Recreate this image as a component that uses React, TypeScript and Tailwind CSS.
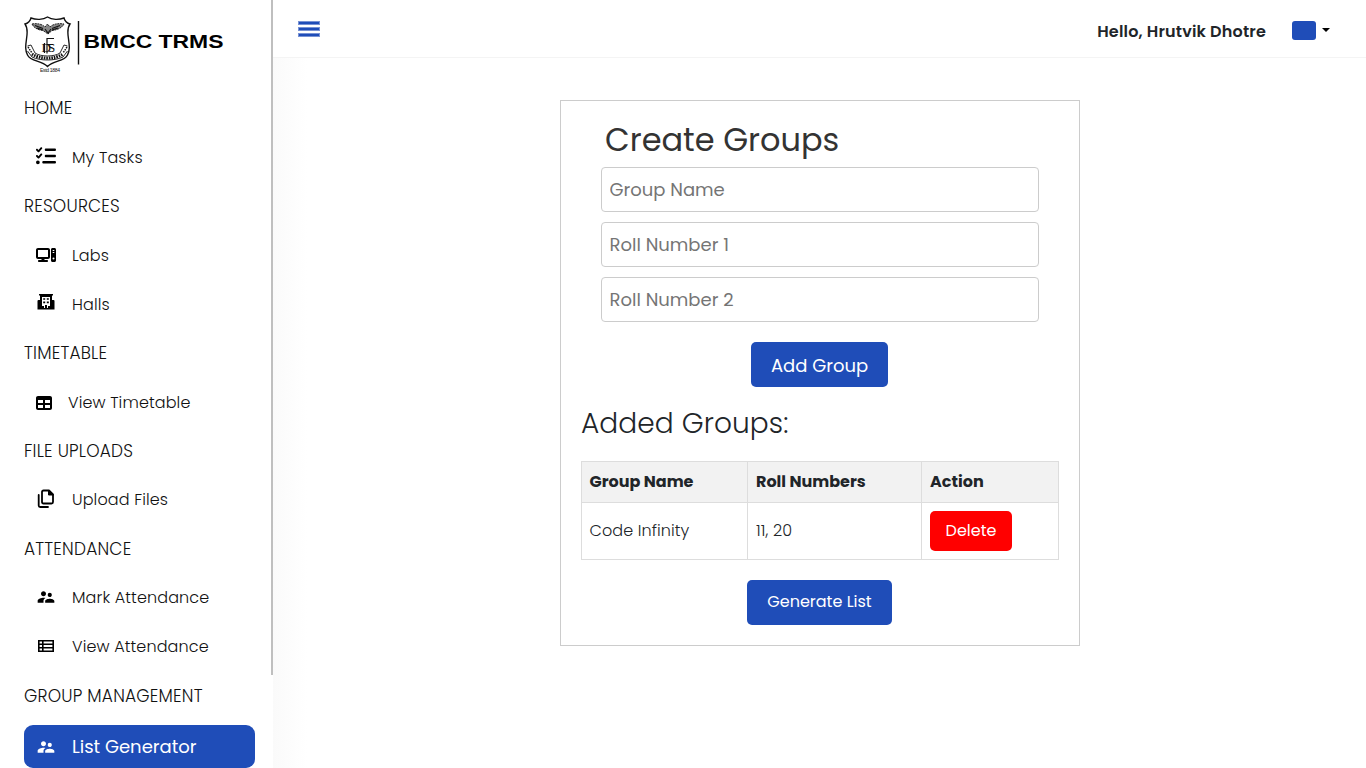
import React from "react";
import { FaListCheck, FaComputer, FaTable } from "react-icons/fa6";
import { MdSupervisorAccount } from "react-icons/md";

function Logo() {
  return (
    <svg width="204" height="64" viewBox="0 0 204 64" className="block" fill="none" stroke="#111">
      <path
        d="M1 8C4 7.500 6.500 4.500 7 2C12 4 19 4 23.500 1C28 4 35 4 40 2C40.500 4.500 43 7.500 46 8C43 12 43.500 17 44.500 23C45.500 30 46 34 43.500 39C40 46 30 44 23.500 50.500C17 44 7 46 3.500 39C1 34 1.500 30 2.500 23C3.500 17 4 12 1 8Z"
        strokeWidth="1.400"
      />
      <path d="M8 8C13 7 18 8 21 11L23.500 8L26 11C29 8 34 7 40 8C38 12 33 14 28 14.500L24 18L19 14.500C14 14 10 12 8 8Z" fill="#888" strokeWidth="0.900" strokeDasharray="2 0.700" />
      <path d="M11 9.500L19 12.500M36 9.500L28 12.500M13 12L19 14M34 12L28 14M21 13L24 17L27 13" strokeWidth="1.100" />
      <text x="17.500" y="36" fontFamily="Liberation Serif, serif" fontSize="13" fill="#111" stroke="none" letterSpacing="-3">DS</text>
      <path d="M23 37.500V22.500H30M23 28.500H29M20.500 27V37" strokeWidth="1.200" />
      <path d="M3.500 30L7 29L9 33L11 37C17 41 30 41 36 37L38 33L40 29L43.500 30M3.500 35L8 41C16 45 31 45 39 41L43.500 35" strokeWidth="0.900" />
      <path d="M8 38C16 43.500 31 43.500 39 38" strokeWidth="3" strokeDasharray="1.600 0.900" />
      <path d="M4 31L8 37M43 31L39 37" strokeWidth="1.500" strokeDasharray="1.500 1" />
      <text x="16" y="55.500" fontFamily="Liberation Sans, sans-serif" fontSize="5" fill="#111" stroke="none" textLength="20">Estd 1884</text>
      <path d="M54.500 5V48.500" strokeWidth="1.400" />
      <text x="59.500" y="32" fontFamily="Liberation Sans, sans-serif" fontWeight="700" fontSize="19" fill="#000" stroke="none" textLength="140" lengthAdjust="spacingAndGlyphs">BMCC TRMS</text>
    </svg>
  );
}

function HallIcon() {
  return (
    <svg width="18" height="16" viewBox="0 0 18 16">
      <path
        fillRule="evenodd"
        d="M2 0H16V1.500H15V6H16.500Q17.500 6 17.500 7V15.500H.5V7Q.5 6 1.500 6H3V1.500H2ZM5 3V12H7V14H8V11H10V14H11V12H13V3ZM6.200 4.200V5.800H8.200V4.200ZM9.800 4.200V5.800H11.800V4.200ZM6.200 7.500V9.200H8.200V7.500ZM9.800 7.500V9.200H11.800V7.500Z"
      />
    </svg>
  );
}

function FilesIcon() {
  return (
    <svg width="18" height="20" viewBox="0 0 18 20" fill="none" stroke="#000" strokeWidth="1.800" strokeLinejoin="round" strokeLinecap="round">
      <path d="M6.500 1.500H12L16 5.500V13Q16 14.500 14.500 14.500H6.500Q5 14.500 5 13V3Q5 1.500 6.500 1.500Z" />
      <path d="M11.500 1.500V6H16Z" fill="#000" strokeWidth="1" />
      <path d="M1.700 6V16.500Q1.700 18 3.200 18H11" />
    </svg>
  );
}

function ListIcon() {
  return (
    <svg width="16" height="12" viewBox="0 0 16 12" fill="none" stroke="#000" strokeWidth="1.600">
      <path d="M.8.8H15.200V11.200H.8ZM.8 4.250H15.200M.8 7.750H15.200M4.800.8V11.200" />
    </svg>
  );
}

function Section({ children }: { children: React.ReactNode }) {
  return <div className="flex h-[49px] items-center pt-px pl-6 text-[17px] font-light tracking-[0.2px] text-[#111]">{children}</div>;
}

function Item({ icon, children, className }: { icon: React.ReactNode; children: React.ReactNode; className: string }) {
  return (
    <a className="flex h-[49px] items-center pl-9 text-[16px] font-light tracking-[0.12px] text-[#111]">
      <span className="flex w-9 shrink-0 items-center text-black">{icon}</span>
      <span className={className}>{children}</span>
    </a>
  );
}

function MenuBar() {
  return <span className="h-1 w-[22px] border border-[#7892d4] bg-[#1f4db8]" />;
}

function Field({ placeholder }: { placeholder: string }) {
  return (
    <input
      placeholder={placeholder}
      className="block h-[45px] w-full rounded-[4px] border border-[#ccc] px-[7.5px] text-[18px] font-normal placeholder:text-[#757575]"
    />
  );
}

export default function App() {
  return (
    <div className="flex h-[768px] w-[1366px] overflow-hidden bg-white font-[Poppins,Inter,sans-serif] whitespace-nowrap text-[#212529]">
      <aside className="flex h-full w-[273px] shrink-0">
        <div className="w-[271px] shrink-0">
          <div className="h-[84px] pt-4 pl-6">
            <Logo />
          </div>
          <Section>HOME</Section>
          <Item icon={<span className="pb-1"><FaListCheck size={20} /></span>} className="">My Tasks</Item>
          <Section>RESOURCES</Section>
          <Item icon={<span className="pb-0.5"><FaComputer size={20} /></span>} className="">Labs</Item>
          <Item icon={<span className="pb-1.5 pl-px"><HallIcon /></span>} className="">Halls</Item>
          <Section>TIMETABLE</Section>
          <Item icon={<FaTable size={16} />} className="-ml-1">View Timetable</Item>
          <Section>FILE UPLOADS</Section>
          <Item icon={<span className="pb-1 pl-px"><FilesIcon /></span>} className="pb-0.5">Upload Files</Item>
          <Section>ATTENDANCE</Section>
          <Item icon={<span className="pb-1"><MdSupervisorAccount size={20} /></span>} className="pb-0.5">Mark Attendance</Item>
          <Item icon={<span className="pb-1 pl-0.5"><ListIcon /></span>} className="pb-0.5">View Attendance</Item>
          <Section>GROUP MANAGEMENT</Section>
          <a className="mt-1 ml-6 flex h-[43px] w-[231px] items-center rounded-[9px] bg-[#1f4db8] pl-3 text-[18px] text-white">
            <span className="w-9"><MdSupervisorAccount size={20} /></span>
            <span>List Generator</span>
          </a>
        </div>
        <div className="h-[675px] w-0.5 bg-[#bfbfbf]" />
      </aside>
      <div className="flex min-w-0 flex-1 flex-col">
        <header className="flex h-[58px] shrink-0 items-center border-b border-[#f4f4f4] pr-9 pl-[25px]">
          <div className="flex flex-col gap-0.5 pt-px">
            <MenuBar />
            <MenuBar />
            <MenuBar />
          </div>
          <span className="ml-auto pt-[6px] text-[16px] font-semibold tracking-[0.18px]">Hello, Hrutvik Dhotre</span>
          <span className="mt-[3px] ml-[26px] h-[19px] w-6 rounded-[3px] bg-[#1f4db8]" />
          <span className="mt-[3px] ml-1.5 border-x-4 border-t-4 border-x-transparent border-t-black" />
        </header>
        <main className="flex-1 bg-linear-to-r from-[#fafafa] to-white to-[34px] pt-[42px] pl-[287px]">
          <section className="h-[546px] w-[520px] border border-[#ccc] bg-white px-5">
            <h2 className="flex h-[66px] items-center pt-3 pl-6 text-[32px] text-[#333]">Create Groups</h2>
            <div className="flex flex-col gap-2.5 px-5">
              <Field placeholder="Group Name" />
              <Field placeholder="Roll Number 1" />
              <Field placeholder="Roll Number 2" />
            </div>
            <button className="mt-5 ml-[170px] block h-[45px] w-[137px] rounded-[5px] bg-[#1f4db8] pt-0.5 text-[18px] text-white">Add Group</button>
            <h3 className="mt-5 flex h-[34px] items-center text-[28px] font-light tracking-[0.1px]">Added Groups:</h3>
            <table className="mt-5 w-[478px] table-fixed border-collapse text-left text-[16px]">
              <thead>
                <tr className="h-[41px] bg-[#f2f2f2] font-semibold">
                  <th className="w-[166px] border border-[#ddd] px-[7.5px]">Group Name</th>
                  <th className="w-[174px] border border-[#ddd] px-2">Roll Numbers</th>
                  <th className="border border-[#ddd] px-2">Action</th>
                </tr>
              </thead>
              <tbody>
                <tr className="h-[57px] font-light">
                  <td className="border border-[#ddd] px-[7.5px] tracking-[0.1px]">Code Infinity</td>
                  <td className="border border-[#ddd] px-2 tracking-[0.1px]">11, 20</td>
                  <td className="border border-[#ddd] px-2">
                    <button className="block h-10 w-[82px] rounded-[5px] bg-[#f00] font-normal text-white">Delete</button>
                  </td>
                </tr>
              </tbody>
            </table>
            <button className="mt-5 ml-[166px] block h-[45px] w-[145px] rounded-[5px] bg-[#1f4db8] pb-0.5 text-[16px] text-white">Generate List</button>
          </section>
        </main>
      </div>
    </div>
  );
}
